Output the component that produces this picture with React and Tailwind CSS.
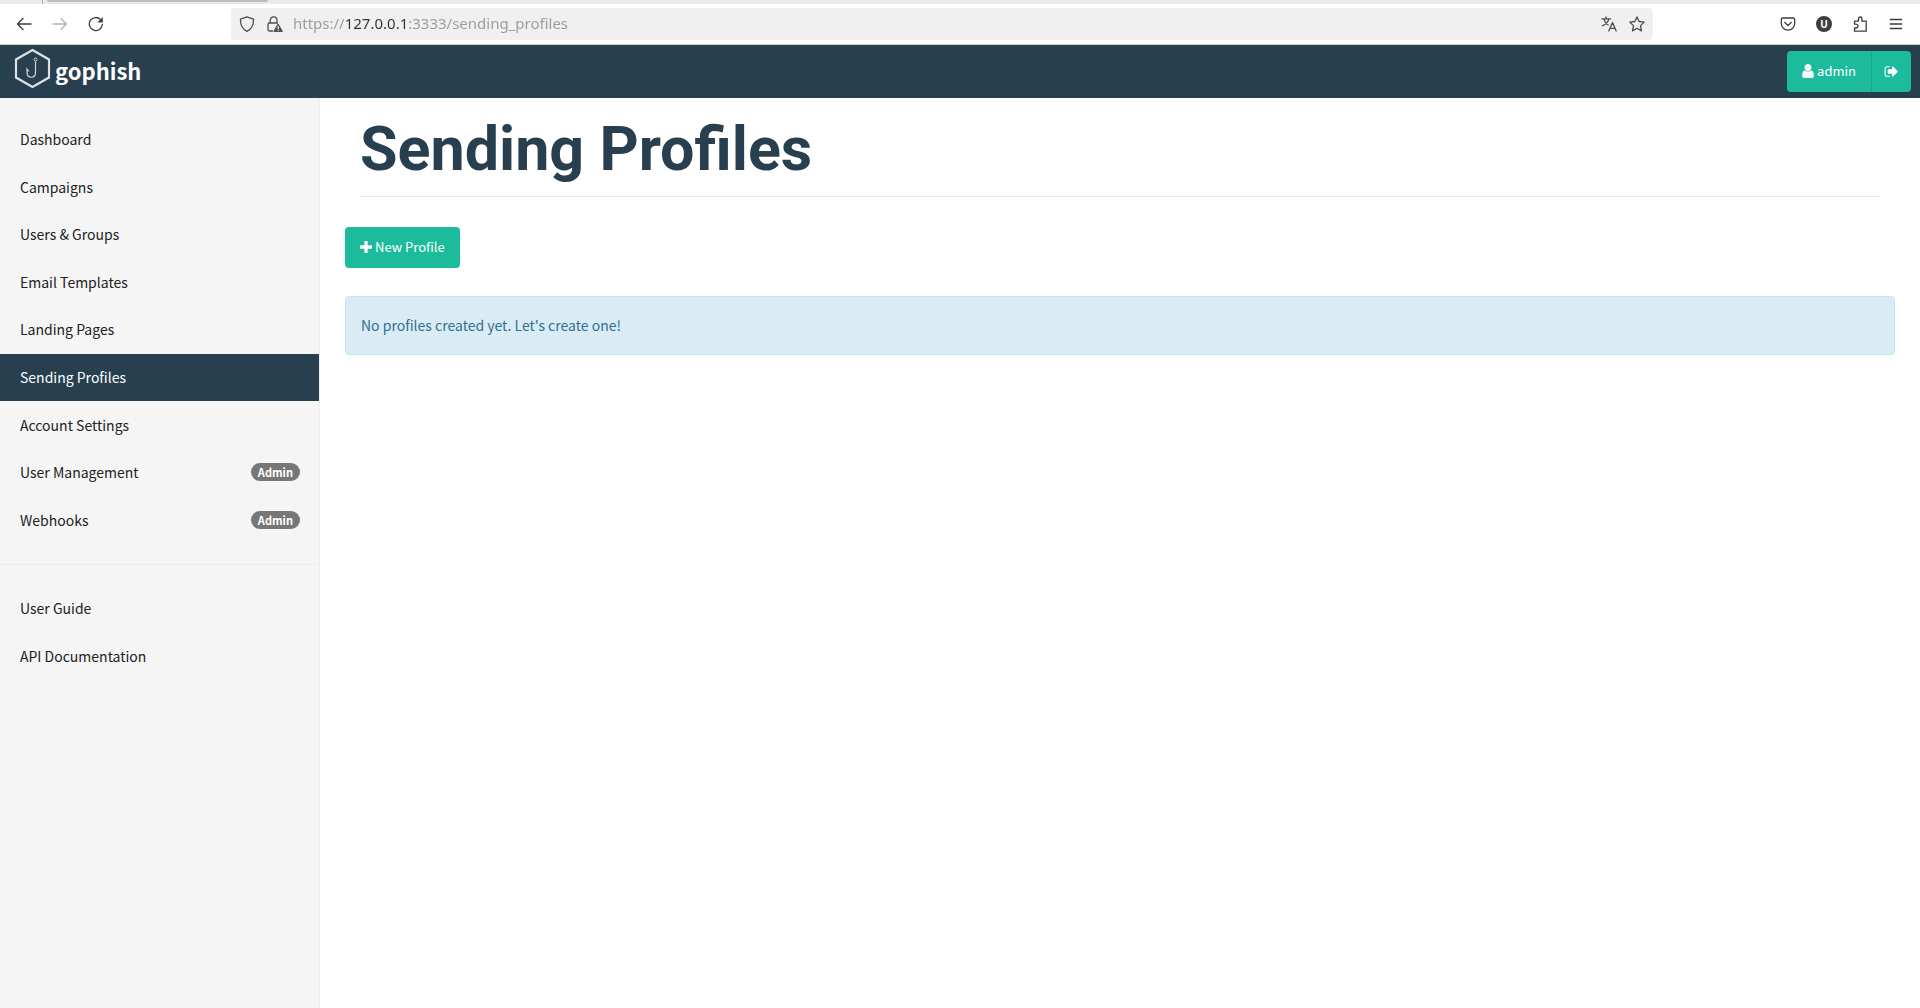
const navItems = [
  { label: "Dashboard" },
  { label: "Campaigns" },
  { label: "Users & Groups" },
  { label: "Email Templates" },
  { label: "Landing Pages" },
  { label: "Sending Profiles", active: true },
  { label: "Account Settings" },
  { label: "User Management", badge: "Admin" },
  { label: "Webhooks", badge: "Admin" },
];

const helpItems = [{ label: "User Guide" }, { label: "API Documentation" }];

function LineIcon({ children, className = "text-[#3d3d3d]" }) {
  return (
    <svg
      viewBox="0 0 16 16"
      className={`size-4 ${className}`}
      fill="none"
      stroke="currentColor"
      strokeWidth="1.3"
      strokeLinecap="round"
      strokeLinejoin="round"
      aria-hidden="true"
    >
      {children}
    </svg>
  );
}

function SolidIcon({ d, viewBox = "0 0 1792 1792", className }) {
  return (
    <svg viewBox={viewBox} className={className} fill="currentColor" aria-hidden="true">
      <path d={d} />
    </svg>
  );
}

const USER =
  "M1536 1399q0 109-62.5 187t-150.5 78h-854q-88 0-150.5-78t-62.5-187q0-85 8.5-160.5t31.5-152 58.5-131 94-89 134.5-34.5q131 128 313 128t313-128q76 0 134.5 34.5t94 89 58.5 131 31.5 152 8.5 160.5zm-256-887q0 159-112.5 271.5t-271.5 112.5-271.5-112.5-112.5-271.5 112.5-271.5 271.5-112.5 271.5 112.5 112.5 271.5z";
const SIGN_OUT =
  "M704 1440q0 4 1 20t.5 26.5-3 23.5-10 19.5-20.5 6.5h-320q-119 0-203.5-84.5t-84.5-203.5v-704q0-119 84.5-203.5t203.5-84.5h320q13 0 22.5 9.5t9.5 22.5q0 4 1 20t.5 26.5-3 23.5-10 19.5-20.5 6.5h-320q-66 0-113 47t-47 113v704q0 66 47 113t113 47h312l11.5 1 11.5 3 8 5.5 7 9 2 13.5zm928-544q0 26-19 45l-544 544q-19 19-45 19t-45-19-19-45v-288h-448q-26 0-45-19t-19-45v-384q0-26 19-45t45-19h448v-288q0-26 19-45t45-19 45 19l544 544q19 19 19 45z";
const PLUS =
  "M1600 736v192q0 40-28 68t-68 28h-416v416q0 40-28 68t-68 28h-192q-40 0-68-28t-28-68v-416h-416q-40 0-68-28t-28-68v-192q0-40 28-68t68-28h416v-416q0-40 28-68t68-28h192q40 0 68 28t28 68v416h416q40 0 68 28t28 68z";

function BrowserBar() {
  return (
    <div className="border-b border-[#cccccc] bg-white">
      <div className="flex h-1 bg-[#eaeaea]">
        <div className="w-[43px] border-r border-[#b5b5b5]" />
        <div className="ml-1 h-[2px] w-[221px] rounded-b-sm bg-[#bdbdbd]" />
      </div>
      <div className="flex h-10 items-center px-4">
        <div className="flex w-[215px] items-center gap-5">
          <button type="button" aria-label="Back">
            <LineIcon>
              <path d="M15 8H1.5M7 2.5L1.5 8L7 13.500" />
            </LineIcon>
          </button>
          <button type="button" aria-label="Forward">
            <LineIcon className="text-[#b4b4b4]">
              <path d="M1 8H14.500M9 2.500L14.500 8L9 13.500" />
            </LineIcon>
          </button>
          <button type="button" aria-label="Reload">
            <LineIcon>
              <path d="M14.300 8.500A6.500 6.500 0 1 1 12.600 3.600" />
              <path d="M14.600 1.500V6.200H9.900Z" fill="currentColor" strokeWidth="0.4" />
            </LineIcon>
          </button>
        </div>
        <div className="flex h-8 flex-1 items-center rounded bg-[#f0f0f0] px-2">
          <button type="button" aria-label="Tracking protection">
            <LineIcon className="text-[#4d4d4d]">
              <path d="M8 0.800L14.500 3.200C14.700 8.500 12.800 13 8 15.300C3.200 13 1.300 8.500 1.500 3.200Z" />
            </LineIcon>
          </button>
          <button type="button" aria-label="Connection not secure" className="ml-3">
            <LineIcon className="text-[#4d4d4d]">
              <path d="M3.200 7V4.200A3.400 3.400 0 0 1 10 4.200V7M5.500 15H2.500A1.500 1.500 0 0 1 1 13.500V8.500A1.500 1.500 0 0 1 2.500 7H10.500" />
              <path d="M11.300 8.300L15.400 15.400H7.200Z" fill="currentColor" strokeWidth="1" />
              <path d="M11.300 10.600V12.600M11.300 14.200V14.300" stroke="#f0f0f0" />
            </LineIcon>
          </button>
          <input
            type="text"
            aria-label="Address"
            defaultValue="https://127.0.0.1:3333/sending_profiles"
            className="ml-[10px] min-w-0 flex-1 bg-[linear-gradient(to_right,#9a9a9a_53px,#333333_53px,#333333_116px,#9a9a9a_116px)] bg-clip-text pb-px font-['Noto_Sans',sans-serif] text-[15px] text-transparent outline-none"
          />
          <div className="flex items-center gap-3">
            <button type="button" aria-label="Translate page">
              <LineIcon className="text-[#4d4d4d]">
                <path d="M0.800 2.800H9.500M5 0.800V2.800M7.800 2.800C7.200 6 4.500 8.500 1.300 9.800M2.800 2.800C3.400 5.500 5.500 7.800 7.200 9" />
                <path d="M7.800 15L11.500 6.500L15.200 15M9 12.300H14" />
              </LineIcon>
            </button>
            <button type="button" aria-label="Bookmark page">
              <LineIcon className="text-[#4d4d4d]">
                <path d="M8 0.900L10.100 5.500L15.200 6.100L11.500 9.600L12.500 14.900L8 12.300L3.500 14.900L4.500 9.600L0.800 6.100L5.900 5.500Z" />
              </LineIcon>
            </button>
          </div>
        </div>
        <div className="ml-[127px] flex items-center gap-5">
          <button type="button" aria-label="Pocket">
            <LineIcon>
              <path d="M2.800 2H13.200A1.500 1.500 0 0 1 14.700 3.500V7.500A6.700 6.700 0 0 1 1.300 7.500V3.500A1.500 1.500 0 0 1 2.800 2Z" />
              <path d="M4.800 6.500L8 9.500L11.200 6.500" />
            </LineIcon>
          </button>
          <button
            type="button"
            aria-label="Account"
            className="size-4 rounded-full bg-[#3d3d3d] text-center font-['Noto_Sans',sans-serif] text-[10px] leading-4 font-bold text-white"
          >
            U
          </button>
          <button type="button" aria-label="Extensions">
            <LineIcon>
              <path d="M2.500 8V5.200H6.500V2.700A1.700 1.700 0 0 1 9.900 2.700V5.200H14.200V15.200H2.500V12H4A1.900 1.900 0 0 0 4 8.100Z" />
            </LineIcon>
          </button>
          <button type="button" aria-label="Application menu">
            <LineIcon>
              <path d="M2.300 3.500H13.700M2.300 8H13.700M2.300 12.500H13.700" />
            </LineIcon>
          </button>
        </div>
      </div>
    </div>
  );
}

function Header() {
  return (
    <header className="flex items-start justify-between bg-[#283f50] pr-[9px] pl-[14px] text-white">
      <a href="#" className="flex items-start gap-1 pt-[3px]">
        <svg viewBox="0 0 37 40" className="h-10 w-[37px]" fill="none" aria-hidden="true">
          <path d="M18.500 2L35 11.500V29.500L18.500 39L2 29.500V11.500Z" stroke="#dfe0e2" strokeWidth="2.200" />
          <circle cx="21.500" cy="11.500" r="1.500" stroke="#cfd4d8" strokeWidth="1" />
          <path d="M21.500 13.200V24C21.500 31 13 31 13 24V21L15 23.500" stroke="#cfd4d8" strokeWidth="1.200" />
        </svg>
        <span className="mt-[6px] text-[22px] leading-8 font-bold">gophish</span>
      </a>
      <div className="my-[6px] flex h-[41px] overflow-hidden rounded text-[13px]">
        <button
          type="button"
          className="flex items-center gap-[3px] border-r border-[#1aa98f] bg-[#1cbb9c] px-[15px] pb-px"
        >
          <SolidIcon d={USER} viewBox="256 128 1280 1536" className="h-[14px] w-3" />
          admin
        </button>
        <button type="button" aria-label="Sign out" className="bg-[#1cbb9c] px-3">
          <SolidIcon d={SIGN_OUT} className="size-[15px]" />
        </button>
      </div>
    </header>
  );
}

function NavLink({ label, badge, active }) {
  return (
    <a
      href="#"
      aria-current={active ? "page" : undefined}
      className={`flex items-center justify-between pr-[19px] pb-px pl-5 ${active ? "bg-[#283f50] text-white" : "text-[#222222]"}`}
    >
      {label}
      {badge && (
        <span className="rounded-full bg-[#777777] px-[7px] text-[11px] leading-[18px] font-bold text-white">
          {badge}
        </span>
      )}
    </a>
  );
}

function Sidebar() {
  return (
    <nav className="w-80 shrink-0 border-r border-[#eeeeee] bg-[#f5f5f5] pt-[18px] text-sm">
      <ul className="grid h-[428px] auto-rows-fr">
        {navItems.map((item) => (
          <li key={item.label} className="grid">
            <NavLink {...item} />
          </li>
        ))}
      </ul>
      <hr className="my-5 border-[#ececec]" />
      <ul className="grid h-[95px] auto-rows-fr">
        {helpItems.map((item) => (
          <li key={item.label} className="grid">
            <NavLink {...item} />
          </li>
        ))}
      </ul>
    </nav>
  );
}

export default function App() {
  return (
    <div className="flex min-h-screen flex-col bg-white font-['Noto_Sans_CJK_SC',sans-serif]">
      <BrowserBar />
      <Header />
      <div className="flex flex-1">
        <Sidebar />
        <main className="min-w-0 flex-1 px-[25px]">
          <h1 className="mx-[15px] border-b border-[#e7e7e7] pt-4 pb-3 font-[Roboto,sans-serif] text-[61px] leading-[70px] font-bold text-[#283f50]">
            Sending Profiles
          </h1>
          <button
            type="button"
            className="mt-[30px] flex h-[41px] items-center gap-[3px] rounded bg-[#1cbb9c] px-[15px] pb-px text-[13px] text-white"
          >
            <SolidIcon d={PLUS} viewBox="192 128 1408 1408" className="size-3" />
            New Profile
          </button>
          <div
            role="status"
            className="mt-7 rounded border border-[#bce8f1] bg-[#d9ecf6] px-[15px] py-4 text-sm leading-[25px] text-[#31708f]"
          >
            No profiles created yet. Let's create one!
          </div>
        </main>
      </div>
    </div>
  );
}
